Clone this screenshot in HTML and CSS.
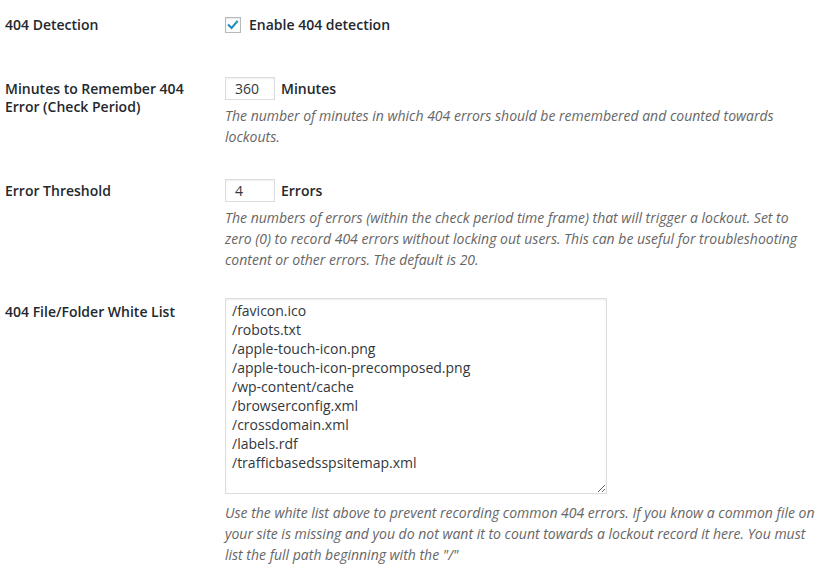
FILE: index.html
```html
<!DOCTYPE html>
<html lang="en">
<head>
    <meta charset="UTF-8">
    <meta name="viewport" content="width=device-width, initial-scale=1.0">
    <title>404 Detection Settings</title>
    <link rel="stylesheet" href="styles.css">
</head>
<body>
    <div class="settings">
        <div class="row row-first">
            <div class="label">404 Detection</div>
            <div class="field">
                <label class="check-line">
                    <span class="checkbox">
                        <svg viewBox="0 0 16 16" width="16" height="16"><path d="M3.2 8.2 L6.4 11.4 L12.6 4.2" fill="none" stroke="#1e8cbe" stroke-width="2.4" stroke-linecap="square"/></svg>
                    </span>
                    <span class="field-label">Enable 404 detection</span>
                </label>
            </div>
        </div>

        <div class="row row-period">
            <div class="label">Minutes to Remember 404 Error (Check Period)</div>
            <div class="field">
                <div class="input-line">
                    <span class="small-input">360</span>
                    <span class="field-label">Minutes</span>
                </div>
                <p class="description">The number of minutes in which 404 errors should be remembered and counted towards lockouts.</p>
            </div>
        </div>

        <div class="row row-threshold">
            <div class="label">Error Threshold</div>
            <div class="field">
                <div class="input-line">
                    <span class="small-input">4</span>
                    <span class="field-label">Errors</span>
                </div>
                <p class="description">The numbers of errors (within the check period time frame) that will trigger a lockout. Set to zero (0) to record 404 errors without locking out users. This can be useful for troubleshooting content or other errors. The default is 20.</p>
            </div>
        </div>

        <div class="row row-list">
            <div class="label">404 File/Folder White List</div>
            <div class="field">
                <textarea class="white-list">/favicon.ico
/robots.txt
/apple-touch-icon.png
/apple-touch-icon-precomposed.png
/wp-content/cache
/browserconfig.xml
/crossdomain.xml
/labels.rdf
/trafficbasedsspsitemap.xml</textarea>
                <p class="description description-list">Use the white list above to prevent recording common 404 errors. If you know a common file on your site is missing and you do not want it to count towards a lockout record it here. You must list the full path beginning with the "/"</p>
            </div>
        </div>
    </div>
</body>
</html>
```

FILE: styles.css
```css
body {
    margin: 0;
    background-color: #fff;
    font-family: "Open Sans", sans-serif;
    font-size: 14px;
    color: #23282d;
}
.settings {
    padding-left: 5px;
}
.row {
    display: flex;
    padding-bottom: 16px;
}
.row-first {
    padding-top: 1px;
    padding-bottom: 28px;
}
.row-period {
    padding-bottom: 17px;
}
.row-threshold {
    padding-bottom: 15px;
}
.label {
    width: 200px;
    padding: 18px 20px 0 0;
    box-sizing: content-box;
    font-weight: 600;
    line-height: 18px;
    flex-shrink: 0;
}
.row-first .label {
    padding-top: 15px;
}
.field {
    padding-top: 15px;
    flex: 1;
}
.row-list .field {
    padding-top: 13px;
}
.check-line {
    display: flex;
    align-items: center;
    height: 18px;
}
.checkbox {
    width: 16px;
    height: 16px;
    border: 1px solid #b4b9be;
    box-sizing: border-box;
    box-shadow: inset 0 1px 2px rgba(0,0,0,0.1);
    margin-right: 8px;
    display: flex;
    align-items: center;
    justify-content: center;
}
.checkbox svg {
    display: block;
}
.field-label {
    font-weight: 600;
    line-height: 18px;
}
.input-line {
    display: flex;
    align-items: center;
}
.small-input {
    width: 50px;
    height: 23px;
    box-sizing: border-box;
    border: 1px solid #ddd;
    box-shadow: inset 0 1px 2px rgba(0,0,0,0.07);
    padding: 0 9px;
    line-height: 21px;
    color: #32373c;
    margin-right: 6px;
}
.description {
    margin: 5px 0 0;
    font-style: italic;
    color: #666;
    line-height: 21px;
    max-width: 590px;
}
.white-list {
    display: block;
    width: 382px;
    height: 196px;
    box-sizing: border-box;
    margin: 0;
    padding: 2px 6px;
    border: 1px solid #ddd;
    box-shadow: inset 0 1px 2px rgba(0,0,0,0.07);
    font-family: "Open Sans", sans-serif;
    font-size: 14px;
    line-height: 19px;
    color: #32373c;
    resize: both;
    overflow: hidden;
}
.description-list {
    margin-top: 8px;
}
```
